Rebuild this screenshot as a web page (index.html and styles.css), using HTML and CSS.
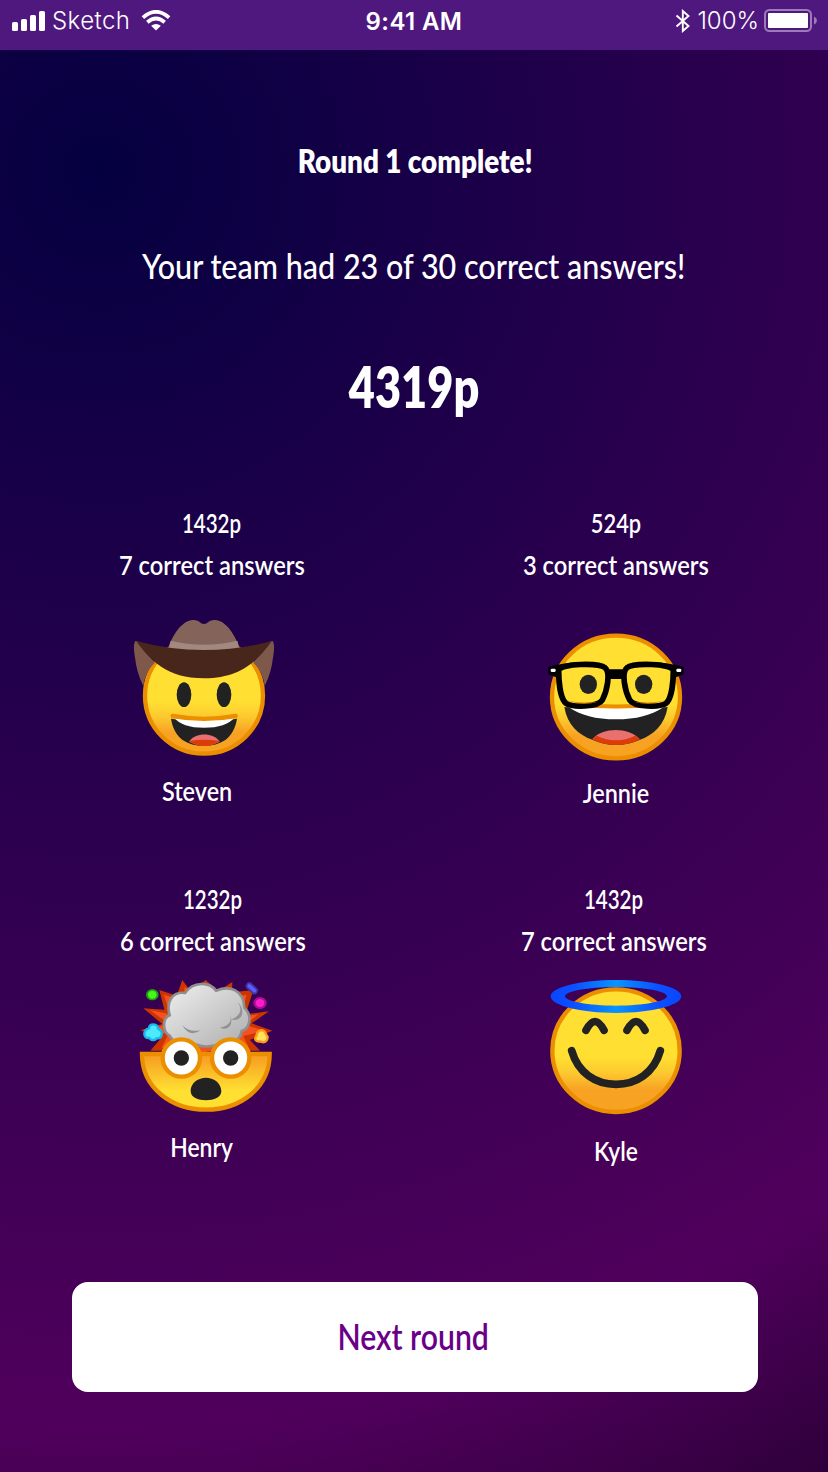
FILE: index.html
```html
<!DOCTYPE html>
<html lang="en">
<head>
<meta charset="utf-8">
<title>Round complete</title>
<link rel="stylesheet" href="styles.css">
</head>
<body>
<div class="screen">
  <header class="status">
    <div class="status-left">
      <svg class="signal" width="34" height="20" viewBox="0 0 34 20" fill="#fff"><rect x="0" y="11" width="6" height="9" rx="1.6"/><rect x="9" y="8" width="6" height="12" rx="1.6"/><rect x="18" y="4" width="6" height="16" rx="1.6"/><rect x="27" y="0" width="6" height="20" rx="1.6"/></svg>
      <span class="carrier">Sketch</span>
      <svg class="wifi" width="30" height="22" viewBox="0 0 30 22" fill="none" stroke="#fff" stroke-width="3.8"><path d="M1.9 7.6Q15-3.9 28.100 7.600"/><path d="M6.300 12.200Q15 4.800 23.700 12.200"/><path d="M10.100 15.800Q15 12.300 19.900 15.800L15 20.500Z" fill="#fff" stroke="none"/></svg>
    </div>
    <div class="time">9:41 AM</div>
    <div class="status-right">
      <svg class="bluetooth" width="16" height="24" viewBox="0 0 16 24" fill="none" stroke="#fff" stroke-width="1.9"><path d="M1.500 6.500L13.500 17L7.800 22V2L13.500 7L1.500 17.500"/></svg>
      <span class="percent">100%</span>
      <svg class="battery" width="54" height="24" viewBox="0 0 54 24"><rect x="1" y="1" width="46" height="21" rx="4.500" fill="none" stroke="#9c7bb8" stroke-width="2"/><rect x="4" y="4" width="40" height="15" rx="1" fill="#fff"/><path d="M50 7.500Q53 9 53 11.500T50 15.500Z" fill="#9c7bb8"/></svg>
    </div>
  </header>

  <main class="results">
    <h1 class="title"><span class="fit fit-title">Round 1 complete!</span></h1>
    <p class="summary"><span class="fit fit-summary">Your team had 23 of 30 correct answers!</span></p>
    <p class="total"><span class="fit fit-total">4319p</span></p>

    <section class="players">
      <article class="player steven">
        <p class="stat"><span class="fit fit-points">1432p</span></p>
        <p class="stat"><span class="fit fit-answers">7 correct answers</span></p>
        <svg class="avatar" viewBox="0 0 510 459">
          <defs><linearGradient id="face" x1="0" y1="0" x2="0" y2="1"><stop offset=".55" stop-color="#ffe032"/><stop offset=".68" stop-color="#fcc92f"/><stop offset=".82" stop-color="#f7a223"/></linearGradient></defs>
          <ellipse cx="252" cy="272" rx="177" ry="174" fill="url(#face)" stroke="#eb8f00" stroke-width="13"/>
          <path d="M46 108Q38 120 45 158Q50 203 70 243Q75 202 104 173L54 109ZM458 108Q466 120 459 158Q454 203 434 243Q429 202 400 173L450 109Z" fill="#7d584b"/>
          <path d="M146 128C158 88 187 46 219 45C239 44 240 57 252 57S265 44 285 45C317 46 345 88 358 128Q250 145 146 128Z" fill="#84645a"/>
          <path d="M152 107Q252 131 352 107L358 129Q252 148 146 129Z" fill="#a18980"/>
          <path d="M48 108Q150 135 252 135T456 108C414 165 364 220 252 220S90 165 48 108Z" fill="#49261b"/>
          <g fill="#222"><ellipse cx="192" cy="269" rx="22" ry="37"/><ellipse cx="312" cy="269" rx="22" ry="37"/></g>
          <path d="M153 341C163 402 203 422 252 422S341 402 351 341Q252 360 153 341Z" fill="#222"/>
          <path d="M207 410C226 381 280 381 299 410Q253 434 207 410Z" fill="#e9706f"/>
          <path d="M207 408Q252 400 299 408Q277 423 252 423T207 408Z" fill="#dc3c08"/>
          <path d="M163 338Q252 353 343 338Q318 368 252 368T163 338Z" fill="#fff"/>
          <path d="M158 333Q252 350 347 333" fill="none" stroke="#eb8f00" stroke-width="13" stroke-linecap="round"/>
        </svg>
        <p class="name"><span class="fit fit-steven">Steven</span></p>
      </article>

      <article class="player jennie">
        <p class="stat"><span class="fit fit-points">524p</span></p>
        <p class="stat"><span class="fit fit-answers">3 correct answers</span></p>
        <svg class="avatar" viewBox="0 0 510 459">
          <ellipse cx="258" cy="261" rx="192" ry="184" fill="url(#face)" stroke="#eb8f00" stroke-width="13"/>
          <path d="M103 291C112 345 145 375 187 389Q222 405 258 405T330 389C371 375 404 345 413 291Q258 310 103 291Z" fill="#222"/>
          <path d="M187 387C219 351 295 351 329 387Q258 420 187 387Z" fill="#e9706f"/>
          <path d="M187 388L200 377Q258 404 316 377L330 388Q298 405 258 405T187 388Z" fill="#dc3c08"/>
          <path d="M116 291Q258 298 401 291C365 316 318 328 258 328S151 316 116 291Z" fill="#fff"/>
          <path d="M112 281Q258 298 404 281" fill="none" stroke="#eb8f00" stroke-width="12"/>
          <path d="M55 170Q101 159 142 157Q200 154 227 178Q258 177 289 178Q316 154 374 157Q415 159 461 170V193L438 202L408 190L296 190L276 207H240L220 190L108 190L78 202L55 193Z"/>
          <g fill="#ffe032" stroke="#000" stroke-width="17" stroke-linejoin="round"><path d="M86 180C94 160 207 158 225 173C243 188 231 243 217 270C204 292 127 292 108 280C89 265 86 205 86 180Z"/><path d="M430 180C422 160 309 158 291 173C273 188 285 243 299 270C312 292 389 292 408 280C427 265 430 205 430 180Z"/></g>
          <path d="M109 271Q155 282 205 275Q155 289 109 271ZM407 271Q361 282 311 275Q361 289 407 271Z" fill="#eb8f00"/>
          <g fill="#222"><ellipse cx="175" cy="223" rx="26" ry="29"/><ellipse cx="341" cy="223" rx="26" ry="29"/></g>
          <g fill="#fff"><rect x="62" y="176" width="15" height="10" rx="4"/><rect x="439" y="176" width="15" height="10" rx="4"/></g>
        </svg>
        <p class="name"><span class="fit fit-jennie">Jennie</span></p>
      </article>

      <article class="player henry">
        <p class="stat"><span class="fit fit-points">1232p</span></p>
        <p class="stat"><span class="fit fit-answers">6 correct answers</span></p>
        <svg class="avatar" viewBox="0 0 510 459">
          <defs>
            <linearGradient id="half" x1="0" y1="0" x2="0" y2="1"><stop offset=".08" stop-color="#f7a223"/><stop offset=".65" stop-color="#ffdf32"/></linearGradient>
            <linearGradient id="smoke" x1="0" y1="0" x2="1" y2="1"><stop offset=".2" stop-color="#e3e3e3"/><stop offset="1" stop-color="#adadad"/></linearGradient>
          </defs>
          <path d="M70 130L133 134L118 75L170 92L187 45L213 80L257 45L295 78L337 51L336 82L400 75L377 148L447 139L395 175L457 197L390 225L420 257H91L126 216L61 196L127 177Z" fill="#cc3500"/>
          <path d="M90 135L150 148L132 90L190 105L194 65L225 90L257 60L290 88L326 70L325 95L380 90L360 155L415 148L375 180L435 197L370 213L385 245L250 262L125 248L145 208L90 196L145 175Z" fill="#f5511e"/>
          <path d="M66 267H449C449 370 360 434 258 434S66 370 66 267Z" fill="url(#half)" stroke="#eb8f00" stroke-width="13"/>
          <path d="M149 212C127 201 126 160 149 151C137 110 158 78 195 84C220 48 268 50 288 77C330 60 371 75 373 128C398 151 391 190 365 198C361 229 329 241 302 234C275 249 244 245 231 239C205 252 164 241 149 212Z" fill="url(#smoke)" stroke="#8f8f8f" stroke-width="8"/>
          <path d="M187 181Q210 204 243 195Q209 220 187 181ZM322 141C340 160 334 181 299 188C334 202 345 164 322 141ZM352 112C370 131 361 155 333 163C370 174 378 130 352 112Z" fill="#929292"/>
          <g fill="#fff" stroke="#eb8f00" stroke-width="13"><circle cx="184" cy="279" r="56"/><circle cx="332" cy="279" r="56"/></g>
          <g fill="#222"><circle cx="184" cy="279" r="23"/><circle cx="332" cy="279" r="23"/><path d="M212 379C211 353 236 338 258 338S304 353 304 379C304 397 282 406 258 406S212 397 212 379Z"/></g>
          <ellipse cx="97" cy="89" rx="19" ry="17" fill="#259d13"/><ellipse cx="97" cy="89" rx="13" ry="12" fill="#44fa18"/>
          <ellipse cx="420" cy="114" rx="20" ry="18" fill="#b30c93"/><ellipse cx="420" cy="114" rx="13" ry="12" fill="#ff1ccf"/>
          <path d="M388 63L403 77" stroke="#3b38a7" stroke-width="22" stroke-linecap="round"/><path d="M388 63L403 77" stroke="#615cff" stroke-width="11" stroke-linecap="round"/>
          <path d="M87 190C88 174 113 174 114 191C132 199 127 222 110 220C98 232 90 221 88 219C68 221 68 195 87 190Z" fill="#4de9ff" stroke="#18b9ed" stroke-width="7"/>
          <path d="M409 213C411 197 424 191 434 200L443 216C442 233 429 234 420 229C406 232 402 221 409 213Z" fill="#ffe35a" stroke="#ff9c1d" stroke-width="7"/>
        </svg>
        <p class="name"><span class="fit fit-henry">Henry</span></p>
      </article>

      <article class="player kyle">
        <p class="stat"><span class="fit fit-points">1432p</span></p>
        <p class="stat"><span class="fit fit-answers">7 correct answers</span></p>
        <svg class="avatar" viewBox="0 0 510 459">
          <defs><linearGradient id="halo"><stop stop-color="#0846ff"/><stop offset=".18" stop-color="#0c50ff"/><stop offset=".5" stop-color="#0894ff"/><stop offset=".82" stop-color="#0c50ff"/><stop offset="1" stop-color="#0846ff"/></linearGradient></defs>
          <ellipse cx="258" cy="257" rx="191" ry="184" fill="url(#face)" stroke="#eb8f00" stroke-width="13"/>
          <path fill-rule="evenodd" d="M62 94C62 67 150 45 258 45S454 67 454 94S366 144 258 144S62 121 62 94ZM105 94C105 79 170 66 258 66S411 79 411 94S340 122 258 122S105 109 105 94Z" fill="url(#halo)"/>
          <path d="M168 196Q195 143 222 196M291 196Q318 143 345 196" fill="none" stroke="#222" stroke-width="23" stroke-linecap="round"/>
          <path d="M125 257C144 324 197 358 258 358S372 324 391 257" fill="none" stroke="#222" stroke-width="23" stroke-linecap="round"/>
        </svg>
        <p class="name"><span class="fit fit-kyle">Kyle</span></p>
      </article>
    </section>

    <button class="next" type="button"><span class="fit fit-next">Next round</span></button>
  </main>
</div>
</body>
</html>
```

FILE: styles.css
```css
* { box-sizing: border-box; }
body { margin: 0; }
p, h1 { margin: 0; }
svg { display: block; flex: none; }

.screen {
  width: 828px;
  height: 1472px;
  overflow: hidden;
  color: #fff;
  font-family: Lato, sans-serif;
  background: radial-gradient(circle 1492px at 100px 170px, #040040 0, #50005c 84.3%, #2e003a 100%);
}

.status {
  height: 50px;
  padding: 0 10px 9px 12px;
  background: #4f187f;
  display: grid;
  grid-template-columns: 1fr auto 1fr;
  align-items: center;
  font: 300 24px/30px Inter, sans-serif;
}
.status-left, .status-right { display: flex; align-items: center; }
.status-right { justify-content: flex-end; }
.carrier { margin-left: 6px; letter-spacing: 0.45px; }
.wifi { margin-left: 11px; }
.time { font-weight: 600; padding: 2px 2px 0 0; letter-spacing: 0.4px; }
.percent { margin: 0 5px 0 6px; }

.results { display: flex; flex-direction: column; align-items: center; }

/* Condensed lettering */
.fit { display: inline-block; white-space: nowrap; }
.fit-title { transform: scaleX(0.869); }
.fit-summary { transform: scaleX(0.872); }
.fit-total { transform: scaleX(0.805); }
.fit-points { transform: scaleX(0.79); }
.fit-answers { transform: scaleX(0.912); }
.fit-steven, .fit-jennie { transform: scaleX(0.9); }
.fit-henry, .fit-kyle { transform: scaleX(0.88); }
.fit-next { transform: scaleX(0.84); }
.jennie .fit-points { transform: scaleX(0.84); }

.title { margin: 90px 0 0 2px; font-size: 32px; line-height: 42px; font-weight: 800; }
.summary { margin-top: 61px; font-size: 35px; line-height: 44px; font-weight: 500; }
.total { margin-top: 65px; font-size: 56px; line-height: 70px; font-weight: 800; }

.players {
  width: 684px;
  height: 752px;
  margin-top: 80px;
  display: grid;
  grid-template-columns: 280px 280px;
  grid-template-rows: 376px 376px;
  justify-content: space-between;
}
.player { display: flex; flex-direction: column; align-items: center; font-size: 26px; font-weight: 600; }
.stat { line-height: 42px; }
.name { line-height: 36px; }
.avatar { width: 170px; height: 153px; }
.steven .stat { margin-right: 1px; }
.steven .avatar { margin: 19px 14px 15px 0; }
.steven .name { margin-right: 29px; }
.jennie .avatar { margin: 24px 2px 12px 0; }
.henry .stat { margin-left: 1px; }
.henry .avatar { margin: 3px 14px 11px 0; }
.henry .name { margin-right: 21px; }
.kyle .stat { margin-right: 5px; }
.kyle .avatar { margin: 3px 2px 15px 0; }

.next {
  width: 686px;
  height: 110px;
  margin: 28px 0 0 2px;
  padding: 0 4px 2px 0;
  border: 0;
  border-radius: 16px;
  background: #fff;
  color: #6b0088;
  font: 600 36px/48px Lato, sans-serif;
}
```
